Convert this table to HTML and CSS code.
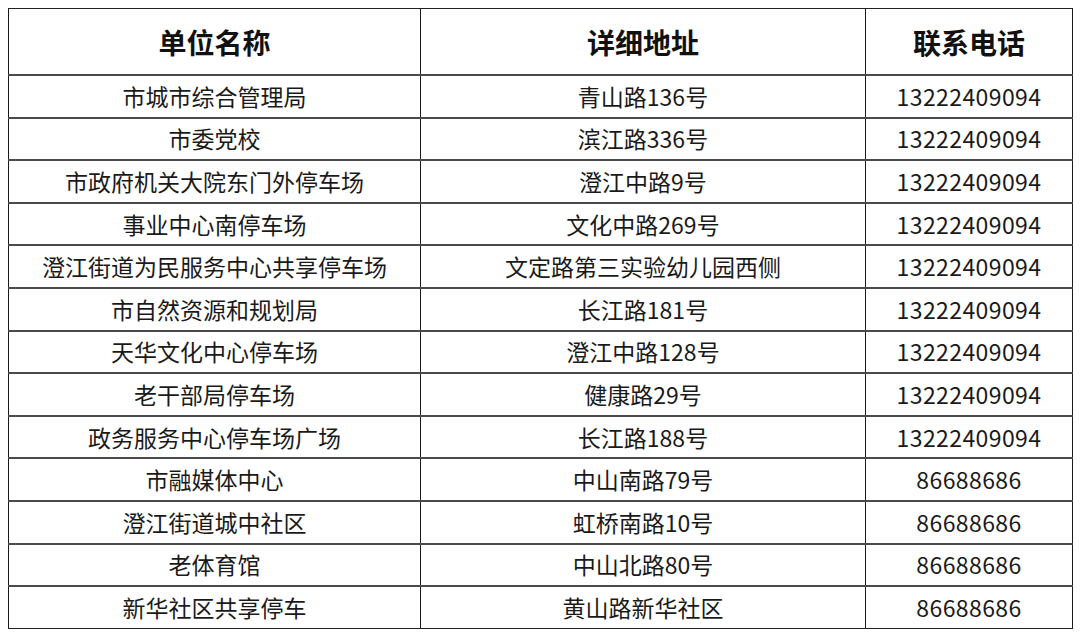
FILE: index.html
```html
<!DOCTYPE html>
<html lang="zh-CN">
<head>
<meta charset="utf-8">
<link rel="stylesheet" href="styles.css">
</head>
<body>
<table class="tbl">
<colgroup><col class="c1"><col class="c2"><col class="c3"></colgroup>
<thead>
<tr class="head"><th>单位名称</th><th>详细地址</th><th>联系电话</th></tr>
</thead>
<tbody>
<tr><td>市城市综合管理局</td><td>青山路136号</td><td>13222409094</td></tr>
<tr><td>市委党校</td><td>滨江路336号</td><td>13222409094</td></tr>
<tr><td>市政府机关大院东门外停车场</td><td>澄江中路9号</td><td>13222409094</td></tr>
<tr><td>事业中心南停车场</td><td>文化中路269号</td><td>13222409094</td></tr>
<tr><td>澄江街道为民服务中心共享停车场</td><td>文定路第三实验幼儿园西侧</td><td>13222409094</td></tr>
<tr><td>市自然资源和规划局</td><td>长江路181号</td><td>13222409094</td></tr>
<tr><td>天华文化中心停车场</td><td>澄江中路128号</td><td>13222409094</td></tr>
<tr><td>老干部局停车场</td><td>健康路29号</td><td>13222409094</td></tr>
<tr><td>政务服务中心停车场广场</td><td>长江路188号</td><td>13222409094</td></tr>
<tr><td>市融媒体中心</td><td>中山南路79号</td><td>86688686</td></tr>
<tr><td>澄江街道城中社区</td><td>虹桥南路10号</td><td>86688686</td></tr>
<tr><td>老体育馆</td><td>中山北路80号</td><td>86688686</td></tr>
<tr><td>新华社区共享停车</td><td>黄山路新华社区</td><td>86688686</td></tr>
</tbody>
</table>
</body>
</html>
```

FILE: styles.css
```css
html, body {
  margin: 0;
  padding: 0;
  background: #ffffff;
}
body {
  padding: 8px 0 0 8px;
  font-family: "Noto Sans CJK SC", "Noto Sans", sans-serif;
  color: #1a1a1a;
}
.tbl {
  border-collapse: collapse;
  table-layout: fixed;
  width: 1064px;
}
.c1 { width: 412px; }
.c2 { width: 445px; }
.c3 { width: 207px; }
.tbl th, .tbl td {
  border-left: 1px solid #1a1a1a;
  border-right: 1px solid #1a1a1a;
  border-top: 2px solid #4a4a4a;
  border-bottom: 2px solid #4a4a4a;
  text-align: center;
  vertical-align: middle;
  padding: 0;
  white-space: nowrap;
}
.head th {
  height: 65px;
  font-size: 28px;
  font-weight: 700;
  color: #111;
  border-top: 1px solid #222;
}
.tbl td {
  height: 40.6px;
  font-size: 23px;
  font-weight: 400;
  line-height: 1;
}
.tbl td:nth-child(3) {
  letter-spacing: 0.4px;
}
.tbl tbody tr:last-child td {
  border-bottom: 1px solid #222;
}
```
